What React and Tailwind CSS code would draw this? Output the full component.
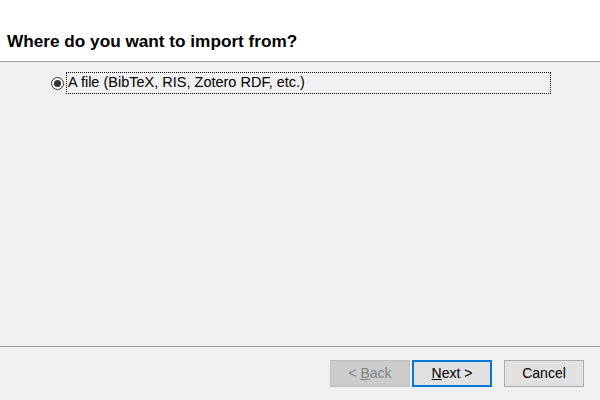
export default function App() {
  return (
    <div
      className="w-[600px] h-[400px] flex flex-col bg-[#f0f0f0] text-black overflow-hidden"
      style={{ fontFamily: '"Liberation Sans", Arial, sans-serif' }}
    >
      {/* header */}
      <div className="h-[62px] bg-white border-b border-[#a0a0a0] flex items-end pl-[7px] pb-[11px]">
        <h1 className="text-[17.2px] font-bold leading-none">Where do you want to import from?</h1>
      </div>

      {/* body */}
      <div className="flex-1 pt-[10px] pl-[51px]">
        <label className="flex items-center h-[22px]">
          <span className="w-[13px] h-[13px] rounded-full border border-[#333] bg-white flex items-center justify-center">
            <span className="w-[7px] h-[7px] rounded-full bg-[#333]" />
          </span>
          <span className="ml-[2px] w-[485px] h-[22px] border border-dotted border-black flex items-center pl-[1px] text-[14.5px]">
            A file (BibTeX, RIS, Zotero RDF, etc.)
          </span>
        </label>
      </div>

      {/* footer */}
      <div className="h-[54px] border-t border-[#a0a0a0] flex items-start justify-end pt-[13px] pr-[16px]">
        <button className="w-[80px] h-[27px] bg-[#cccccc] border border-[#bfbfbf] text-[#838383] text-[14px]">
          &lt; <span className="underline">B</span>ack
        </button>
        <button className="ml-[2px] w-[80px] h-[27px] bg-[#e1e1e1] border-2 border-[#0078d7] text-[14px]">
          <span className="underline">N</span>ext &gt;
        </button>
        <button className="ml-[12px] w-[80px] h-[27px] bg-[#e1e1e1] border border-[#adadad] text-[14px]">
          Cancel
        </button>
      </div>
    </div>
  );
}
